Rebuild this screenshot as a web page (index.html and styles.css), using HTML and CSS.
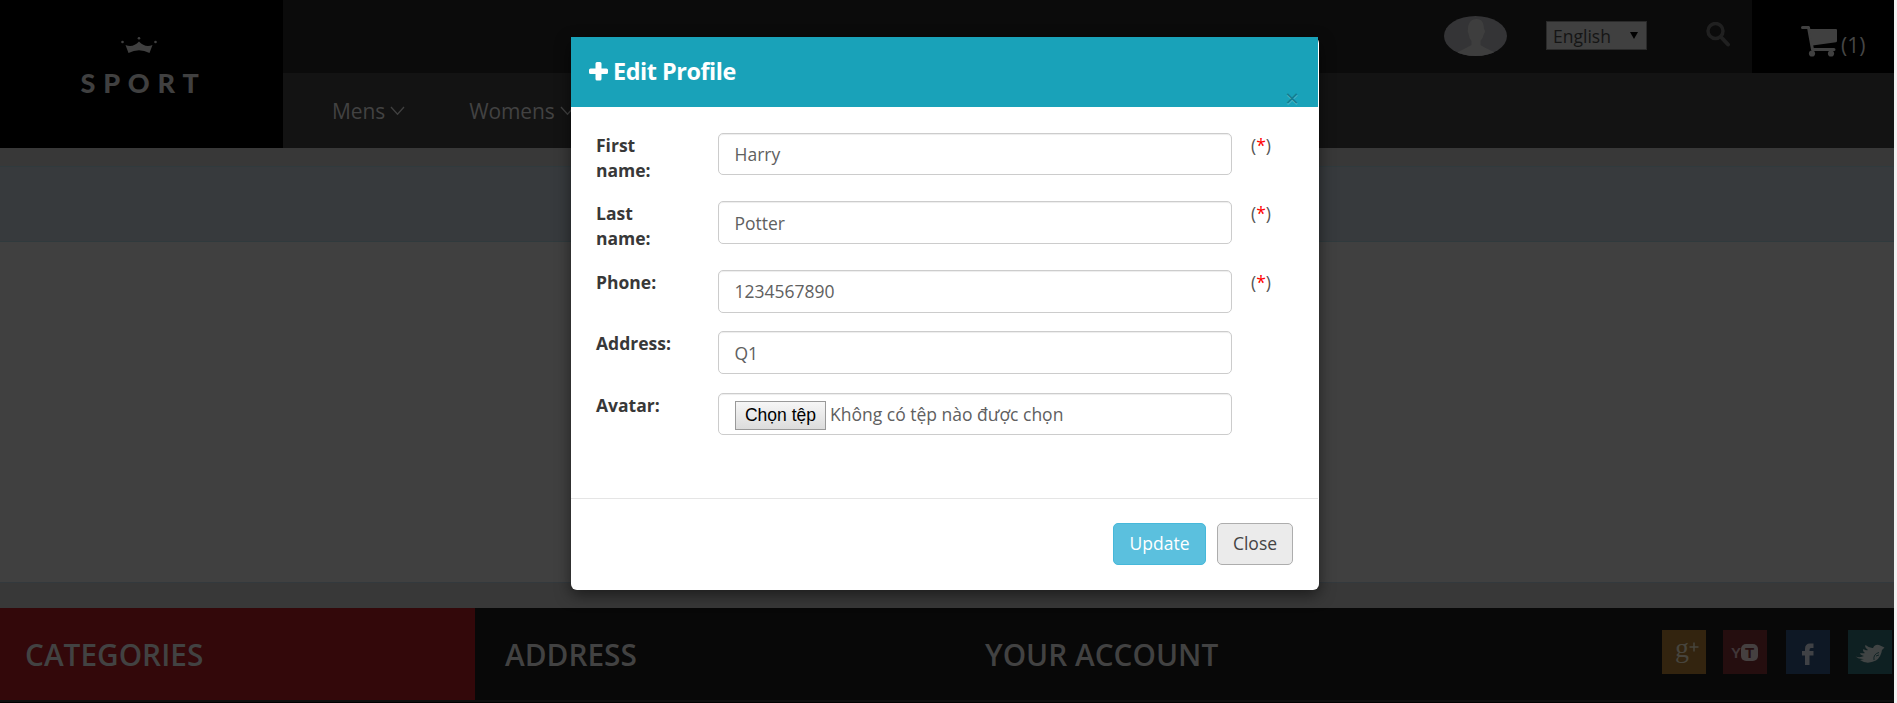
FILE: index.html
```html
<!DOCTYPE html>
<html lang="vi">
<head>
<meta charset="utf-8">
<title>Edit Profile</title>
<link rel="stylesheet" href="styles.css">
</head>
<body>
<div class="page">
  <header class="header">
    <div class="logo">
      <svg class="crown" width="38" height="18" viewBox="0 0 38 18"><path d="M5.500 9Q13 12 19 5.500Q25 12 32.500 9L29.500 17Q19 11.500 8.500 17Z"/><circle cx="2.500" cy="6" r="1.300"/><circle cx="19" cy="2.300" r="1.300"/><circle cx="35.500" cy="6" r="1.300"/></svg>
      <span class="logo-text">SPORT</span>
    </div>
    <div class="header-main">
      <div class="topbar">
        <svg class="avatar" width="63" height="40" viewBox="0 0 63 40"><defs><clipPath id="oval"><ellipse cx="31.500" cy="20" rx="31.500" ry="20"/></clipPath></defs><g clip-path="url(#oval)"><rect width="63" height="40" fill="#343436"/><path d="M32.500 3C27 3 24 7 24 13Q23 15 24.500 18Q25 22 27.500 25V29Q22 32 14 36V40H50V36Q41 32 36.500 29V25Q39 22 40 18Q42 15 40 13C40 7 38 3 32.500 3Z" fill="#3e3e3e"/></g></svg>
        <div class="language"><span>English</span><span class="arrow"></span></div>
        <svg class="search" width="24" height="26" viewBox="0 0 24 26"><circle cx="9.500" cy="9" r="7.500" fill="none" stroke="#202020" stroke-width="3.500"/><path d="M15 15L22 22.500" stroke="#202020" stroke-width="4" stroke-linecap="round"/></svg>
        <div class="cart">
          <svg width="37" height="31" viewBox="0 0 37 31"><path d="M1.500 1.500H7.500L11.500 23.500H33" fill="none" stroke="#404040" stroke-width="3" stroke-linecap="round" stroke-linejoin="round"/><path d="M8 3H35Q36 3 36 4V15Q36 16 35 16.300L11.500 19.500Z" fill="#404040"/><circle cx="11" cy="27.500" r="3.100" fill="#404040"/><circle cx="30" cy="27.500" r="3.100" fill="#404040"/></svg>
          <span>(1)</span>
        </div>
      </div>
      <nav class="nav">
        <span class="nav-item">Mens<svg width="16" height="10" viewBox="0 0 16 10"><path d="M1 1L7.500 8.200L14 1"/></svg></span>
        <span class="nav-item">Womens<svg width="16" height="10" viewBox="0 0 16 10"><path d="M1 1L7.500 8.200L14 1"/></svg></span>
      </nav>
    </div>
  </header>
  <div class="strip strip-top"></div>
  <div class="band"></div>
  <main class="content"></main>
  <div class="strip strip-bottom"></div>
  <footer class="footer">
    <h3 class="foot-col categories">CATEGORIES</h3>
    <h3 class="foot-col address">ADDRESS</h3>
    <h3 class="foot-col account">YOUR ACCOUNT</h3>
    <div class="social">
      <span class="tile google"><span class="g">g</span><svg width="10" height="10" viewBox="0 0 10 10"><path d="M5 .5V9.500M.5 5H9.500" stroke="#47443d" stroke-width="1.500"/></svg></span>
      <span class="tile youtube"><span class="y">Y</span><span class="t">T</span></span>
      <span class="tile facebook"><svg width="44" height="44" viewBox="0 0 44 44"><path d="M19 35V25.500H16V21H19V19Q19 13.500 24 13.500H27.500V18H25Q23.500 18 23.500 20V21H27.500V25.500H23.500V35Z" fill="#3f4145"/></svg></span>
      <span class="tile twitter"><svg width="44" height="44" viewBox="0 0 44 44"><path d="M7.500 26.500Q12 28 16 26Q11 24.500 12.500 23Q15 23.500 17 23Q14 21 15.500 19Q18 21 20 20Q16 17 17.500 15Q22 18.500 25 18Q27 14 31 15L36.500 17.500L34 20Q33 27 28 30.500Q19 35 12 30L16 29Q11 29.500 7.500 26.500Z" fill="#404444"/><path d="M26 30Q25 24 31 22.500M28 26L31 25" fill="none" stroke="#112325"/></svg></span>
    </div>
  </footer>
  <div class="footer-edge"></div>
</div>
<div class="scroll-edge"></div>

<section class="modal">
  <div class="modal-head">
    <h4 class="title"><svg width="19" height="19" viewBox="0 0 19 19"><path d="M8 0H11Q12.500 0 12.500 1.500V6.500H17.500Q19 6.500 19 8V10.500Q19 12 17.500 12H12.500V17Q12.500 18.500 11 18.500H8Q6.500 18.500 6.500 17V12H1.500Q0 12 0 10.500V8Q0 6.500 1.500 6.500H6.500V1.500Q6.500 0 8 0Z" fill="#fff"/></svg>Edit Profile</h4>
    <span class="close-x">×</span>
  </div>
  <form class="modal-body">
    <div class="row"><label>First name:</label><div class="field">Harry</div><span class="req">(<b>*</b>)</span></div>
    <div class="row"><label>Last name:</label><div class="field tall">Potter</div><span class="req">(<b>*</b>)</span></div>
    <div class="row short"><label>Phone:</label><div class="field tall level">1234567890</div><span class="req">(<b>*</b>)</span></div>
    <div class="row last"><label>Address:</label><div class="field tall">Q1</div></div>
    <div class="row"><label>Avatar:</label><div class="field file"><span class="file-btn">Chọn tệp</span>Không có tệp nào được chọn</div></div>
  </form>
  <div class="modal-foot">
    <span class="btn update">Update</span>
    <span class="btn close">Close</span>
  </div>
</section>
</body>
</html>
```

FILE: styles.css
```css
* { box-sizing: border-box; }
body {
  margin: 0;
  height: 703px;
  overflow: hidden;
  display: flex;
  background: #404040;
  font-family: "Open Sans", sans-serif;
  font-size: 17.5px;
  line-height: 25px;
}
h3, h4 { margin: 0; }
.page { width: 1894px; height: 703px; flex: none; }
.scroll-edge { width: 3px; background: #f1f1f1; }

.header { display: flex; height: 148px; background: #131313; }
.logo {
  width: 283px;
  background: #000;
  padding: 36px 5px 0 0;
  display: flex;
  flex-direction: column;
  align-items: center;
}
.crown { fill: #404040; }
.logo-text {
  margin-top: 12px;
  font: 900 27px/34px Lato, sans-serif;
  letter-spacing: 7.8px;
  padding-left: 9px;
  color: #404040;
}
.header-main { flex: 1; }
.topbar { height: 73px; background: #0b0b0b; display: flex; justify-content: flex-end; }
.avatar { margin: 16px 39px 0 0; }
.language {
  width: 101px;
  height: 29px;
  margin: 21px 59px 0 0;
  border: 1px solid #2a2a2a;
  background: #404040;
  color: #151515;
  display: flex;
  justify-content: space-between;
  align-items: center;
  padding: 2px 8px 0 6px;
}
.arrow { border: 4px solid transparent; border-top: 7px solid #000; border-bottom: 0; margin-bottom: 3px; }
.search { margin: 22px 22px 0 0; }
.cart {
  width: 142px;
  background: #000;
  padding: 26px 0 0 49px;
  display: flex;
  gap: 3px;
  font-size: 21px;
  color: #464646;
}
.cart span { margin-top: 7px; }
.nav { display: flex; padding: 26px 0 0 49px; font-size: 21px; color: #424242; }
.nav-item { display: flex; gap: 5px; margin-right: 63px; letter-spacing: -.1px; }
.nav-item svg { margin-top: 7px; fill: none; stroke: #404040; stroke-width: 1.3; }

.strip { background: #383838; }
.strip-top { height: 18px; }
.band { height: 76px; background: #373a3d; border-top: 1px solid #303a3d; border-bottom: 1px solid #303a3d; }
.content { height: 340px; background: #404040; }
.strip-bottom { height: 26px; border-top: 1px solid #33393d; }
.footer { height: 92px; background: #080808; display: flex; }
.footer-edge { height: 3px; background: #0f0f0f; border-bottom: 1px solid #000; }
.foot-col { font-size: 29.8px; line-height: 40px; font-weight: 600; color: #424242; padding: 27px 0 0 30px; width: 480px; }
.categories { width: 475px; padding-left: 25px; background: #33080a; }
.account { width: 699px; }
.social { display: flex; gap: 18px; padding-top: 22px; margin-left: 8px; }
.tile { width: 44px; height: 44px; display: flex; flex: none; }
.google { background: #33240f; margin-right: -1px; color: #47443d; padding-left: 13px; }
.google .g { font: 28px/35px "Liberation Serif", serif; }
.google svg { margin-top: 12px; }
.youtube { background: #250e0f; margin-right: 1px; padding: 14px 0 0 8px; font: 700 15px/17px "Liberation Sans", sans-serif; color: #403637; }
.youtube .y { width: 10px; }
.youtube .t { width: 17px; height: 17px; border-radius: 5px; background: #454040; color: #250e0f; text-align: center; }
.facebook { background: #0e1825; }
.twitter { background: #0e2022; }

.modal {
  position: absolute;
  left: 571px;
  top: 37px;
  width: 748px;
  height: 553px;
  background: #fff;
  border-radius: 6px;
  box-shadow: 0 5px 15px rgba(0, 0, 0, .5);
  color: #555;
}
.modal-head { width: 747px; height: 70px; background: #19a2b9; display: flex; justify-content: space-between; }
.title { display: flex; gap: 5px; padding: 18px 0 0 18px; font-size: 23.4px; line-height: 32px; font-weight: 700; color: #fff; letter-spacing: -.45px; }
.title svg { margin-top: 7px; }
.close-x { padding: 49px 19px 0 0; font-size: 24px; line-height: 24px; color: #147d90; text-shadow: 0 1px 0 #58bdcd; }
.modal-body { padding: 26px 25px 0; height: 391px; }
.row { display: flex; height: 68px; align-items: flex-start; }
.row:nth-child(2) { height: 69px; }
.row.short { height: 61px; }
.row.last { height: 62px; }
label { width: 122px; padding: 0 50px 0 0; font-weight: 700; color: #383838; }
.field {
  width: 514px;
  height: 42px;
  border: 1px solid #ccc;
  border-radius: 5px;
  box-shadow: inset 0 1px 1px rgba(0, 0, 0, .075);
  padding: 0 15.5px;
  display: flex;
  align-items: center;
  color: #606060;
}
.field.tall { height: 43px; padding-top: 2px; }
.field.level { padding-top: 0; }
.field.file { padding: 1px 16px 0; }
.file-btn {
  width: 91px;
  height: 29px;
  margin: 1px 4px 0 0;
  border: 1px solid #999;
  background: linear-gradient(#f6f6f6, #dcdcdc);
  color: #000;
  text-align: center;
  font: 17.5px/26px "Liberation Sans", sans-serif;
}
.req { margin-left: 19px; color: #555; }
.req b { font-weight: 400; color: #f00; }
.modal-foot { width: 747px; border-top: 1px solid #e5e5e5; padding: 24px 25px 0; display: flex; justify-content: flex-end; gap: 11px; }
.btn { height: 42px; border-radius: 5px; text-align: center; line-height: 38px; border: 1px solid; }
.update { width: 93px; background: #5bc0de; border-color: #46b8da; color: #fff; }
.close { width: 76px; background: #ebebeb; border-color: #adadad; color: #444; }
```
